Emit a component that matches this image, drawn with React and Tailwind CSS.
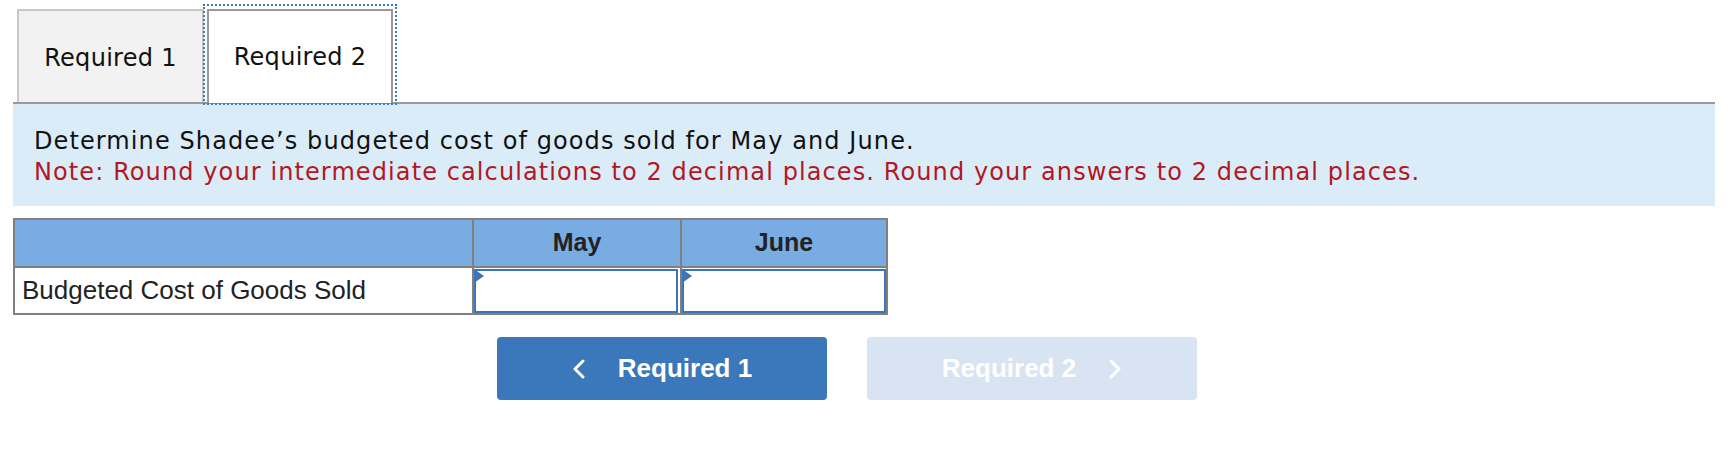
export default function App() {
  const verdana = { fontFamily: '"DejaVu Sans", Verdana, sans-serif' };
  const arial = { fontFamily: '"Liberation Sans", Arial, sans-serif' };

  return (
    <div className="w-[1730px] h-[466px] bg-white pt-[4px] pl-[13px]" style={verdana}>
      {/* tabs */}
      <div className="flex items-start pl-[4px] h-[98px]">
        <div className="mt-[5px] w-[187px] h-[93px] border-2 border-b-0 border-[#c8c8c8] bg-[#f2f2f2] flex items-center justify-center text-[24px] tracking-[0.3px] text-[#111] pt-[2px]">
          Required 1
        </div>
        <div className="relative z-10 -ml-px w-[194px] h-[101px] border-2 border-dotted border-[#3b7bc4] pt-[3px] px-[2px]">
          <div className="h-full border-2 border-b-0 border-[#999] bg-white flex items-center justify-center text-[24px] tracking-[0.3px] text-[#111]">
            Required 2
          </div>
        </div>
      </div>
      <div className="h-[2px] w-[1702px] bg-[#9a9a9a]" />

      {/* instructions */}
      <div className="w-[1702px] h-[102px] bg-[#dbecf9] pt-[22px] pl-[21px] text-[24px] leading-[31px] tracking-[1.1px]">
        <p className="text-[#111]">Determine Shadee’s budgeted cost of goods sold for May and June.</p>
        <p className="text-[#b3171f]">
          Note: Round your intermediate calculations to 2 decimal places. Round your answers to 2 decimal places.
        </p>
      </div>

      {/* table */}
      <div className="mt-[12px] w-[875px] border-2 border-[#808080]" style={arial}>
        <div className="grid grid-cols-[457px_2px_206px_2px_204px] h-[46px] bg-[#79ace3] text-[25px] font-bold text-[#222]">
          <div />
          <div className="bg-[#808080]" />
          <div className="flex items-center justify-center">May</div>
          <div className="bg-[#808080]" />
          <div className="flex items-center justify-center">June</div>
        </div>
        <div className="h-[2px] bg-[#808080]" />
        <div className="grid grid-cols-[457px_2px_206px_2px_204px] h-[45px] text-[26px] text-[#222]">
          <div className="flex items-center pl-[7px]">Budgeted Cost of Goods Sold</div>
          <div className="bg-[#808080]" />
          <div className="relative pt-px pr-[2px]">
            <input className="block w-full h-[44px] border-2 border-[#3a75b9] bg-white outline-none" />
            <span className="absolute left-0 top-px w-0 h-0 border-y-[7px] border-y-transparent border-l-[10px] border-l-[#3a75b9]" />
          </div>
          <div className="bg-[#808080]" />
          <div className="relative pt-px">
            <input className="block w-full h-[44px] border-2 border-[#3a75b9] bg-white outline-none" />
            <span className="absolute left-0 top-px w-0 h-0 border-y-[7px] border-y-transparent border-l-[10px] border-l-[#3a75b9]" />
          </div>
        </div>
      </div>

      {/* nav buttons */}
      <div className="mt-[22px] ml-[484px] flex gap-[40px]" style={arial}>
        <button className="w-[330px] h-[63px] rounded-[4px] bg-[#3b77bb] text-white text-[26px] font-bold flex items-center justify-center gap-[33px]">
          <svg width="13" height="20" viewBox="0 0 13 20" fill="none">
            <polyline points="11,2 3,10 11,18" stroke="white" strokeWidth="3" strokeLinecap="round" strokeLinejoin="round" />
          </svg>
          <span>Required 1</span>
        </button>
        <button disabled className="w-[330px] h-[63px] rounded-[4px] bg-[#d8e4f2] text-white text-[26px] font-bold flex items-center justify-center gap-[33px]">
          <span>Required 2</span>
          <svg width="13" height="20" viewBox="0 0 13 20" fill="none">
            <polyline points="2,2 10,10 2,18" stroke="white" strokeWidth="3" strokeLinecap="round" strokeLinejoin="round" />
          </svg>
        </button>
      </div>
    </div>
  );
}
